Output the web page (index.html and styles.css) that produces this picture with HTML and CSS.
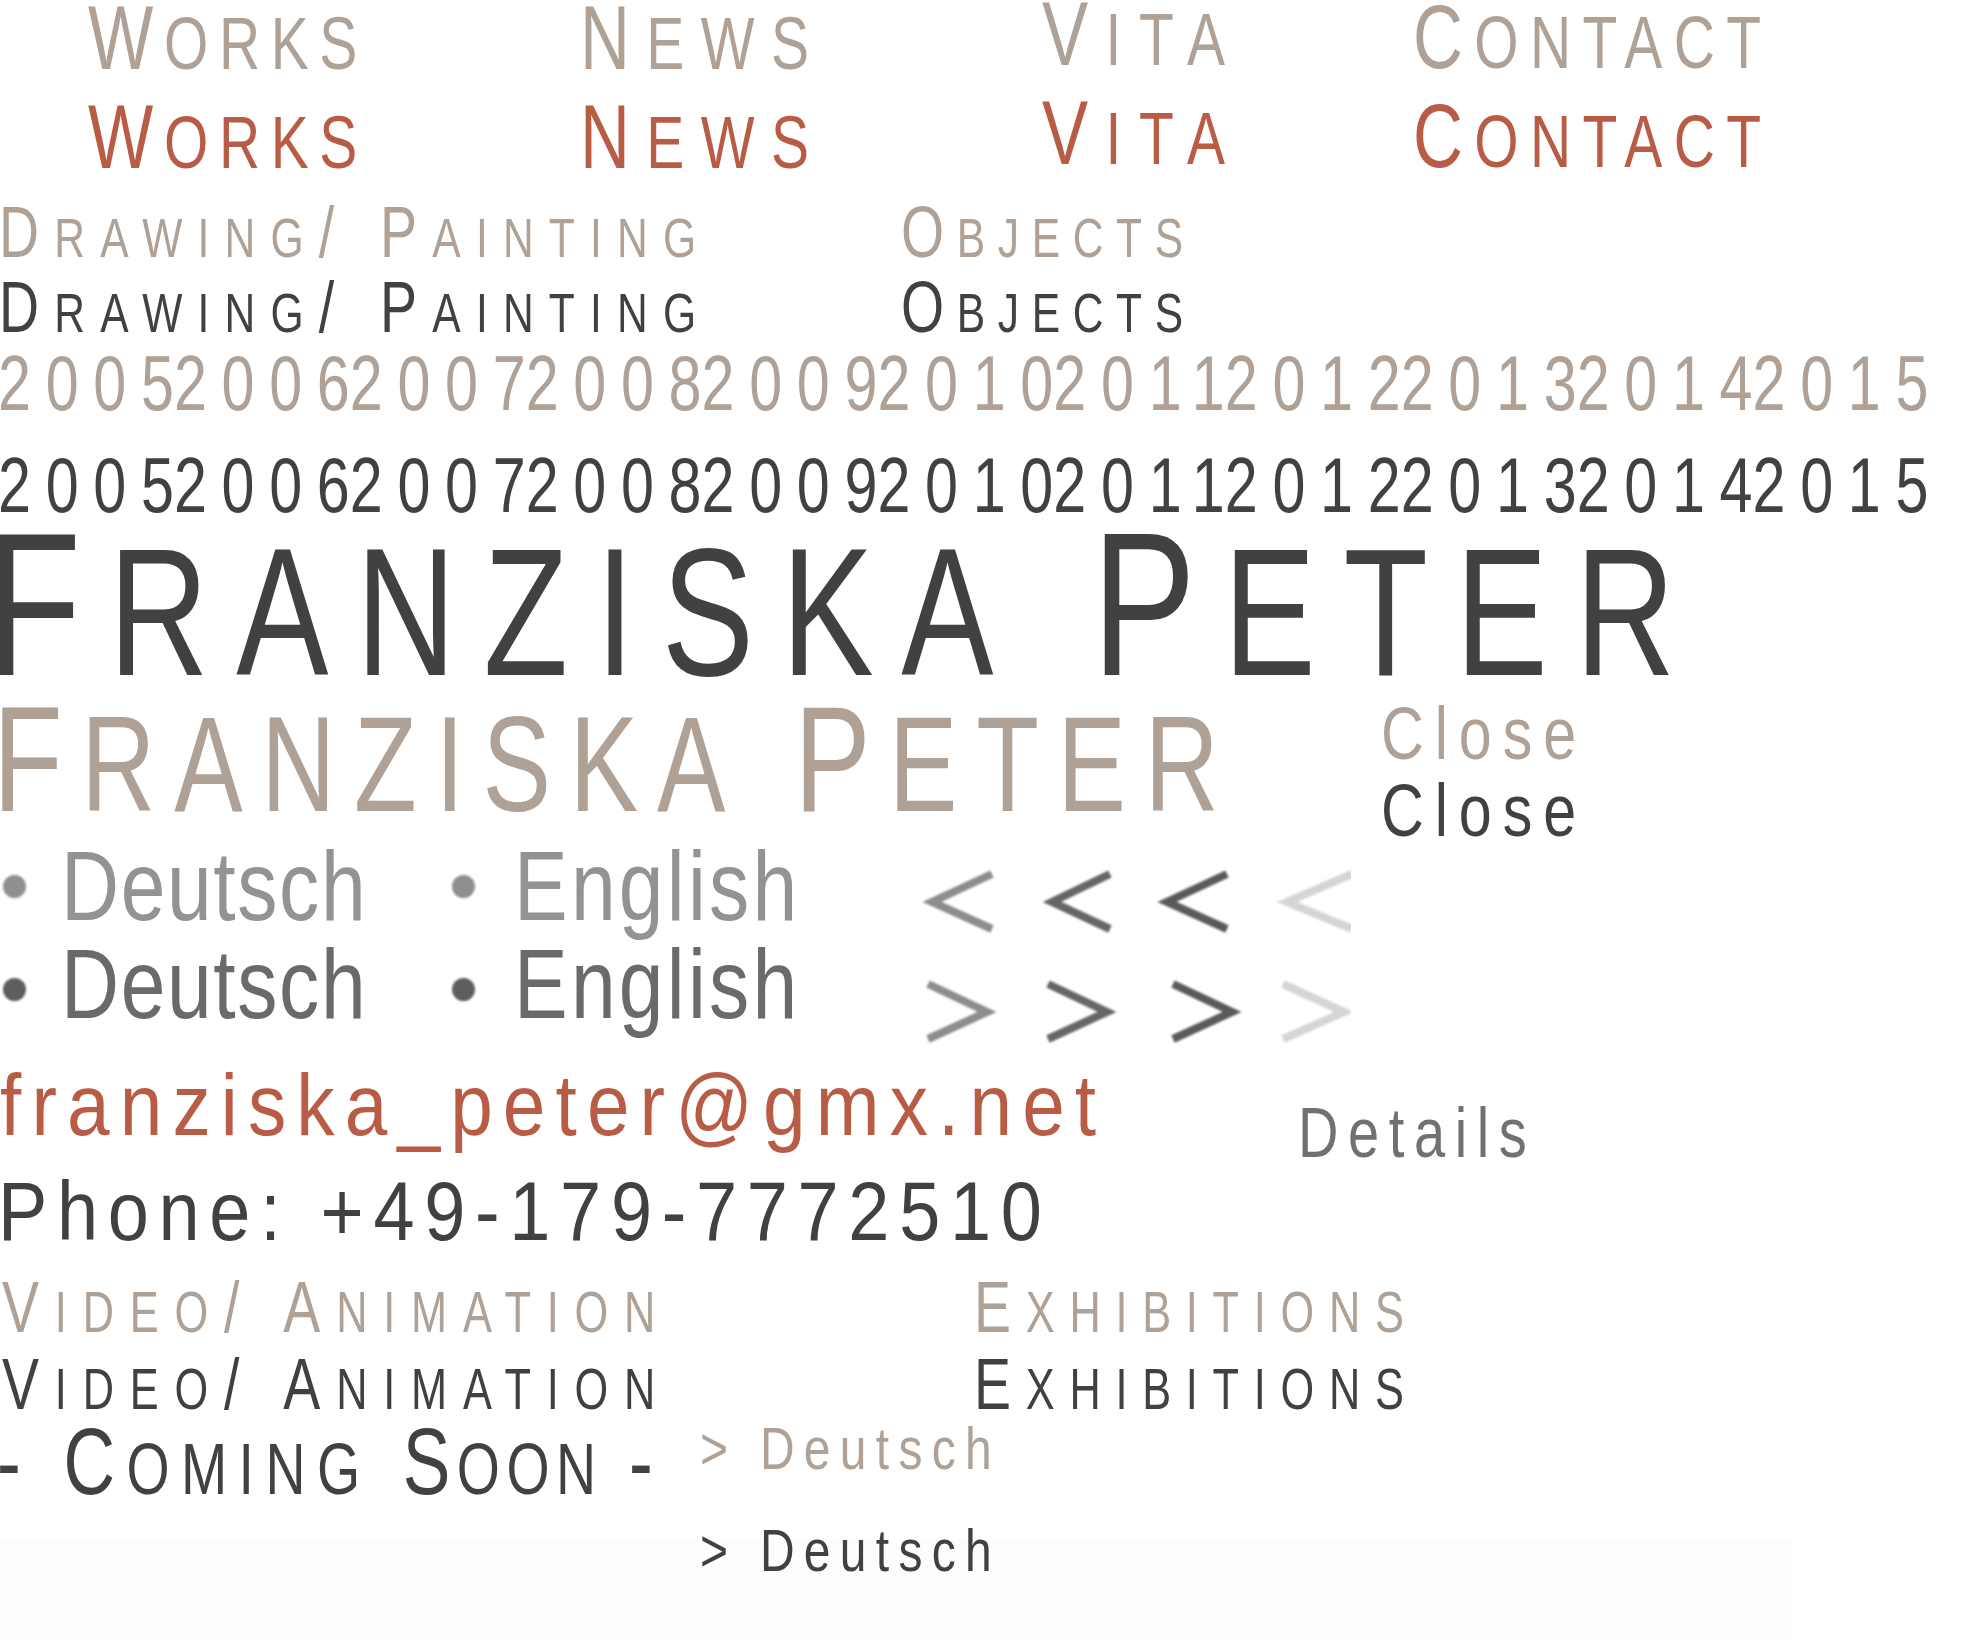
FILE: index.html
```html
<!DOCTYPE html>
<html lang="de">
<head>
<meta charset="utf-8">
<title>Franziska Peter – Sprites</title>
<link rel="stylesheet" href="styles.css">
</head>
<body>
<main class="sheet">
  <div class="haze"></div>

  <!-- navigation, normal and hover -->
  <div class="lbl nav taupe works r1">W<span class="sc">orks</span></div>
  <div class="lbl nav taupe news r1">N<span class="sc">ews</span></div>
  <div class="lbl nav taupe vita r1">V<span class="sc">ita</span></div>
  <div class="lbl nav taupe contact r1">C<span class="sc">ontact</span></div>
  <div class="lbl nav rust works r2">W<span class="sc">orks</span></div>
  <div class="lbl nav rust news r2">N<span class="sc">ews</span></div>
  <div class="lbl nav rust vita r2">V<span class="sc">ita</span></div>
  <div class="lbl nav rust contact r2">C<span class="sc">ontact</span></div>

  <!-- categories -->
  <div class="lbl cat taupe drawing c1">D<span class="sc">rawing</span>/ P<span class="sc">ainting</span></div>
  <div class="lbl cat taupe objects c1">O<span class="sc">bjects</span></div>
  <div class="lbl cat ink drawing c2">D<span class="sc">rawing</span>/ P<span class="sc">ainting</span></div>
  <div class="lbl cat ink objects c2">O<span class="sc">bjects</span></div>

  <!-- years -->
  <div class="lbl years taupe y1"><span>2005</span><span>2006</span><span>2007</span><span>2008</span><span>2009</span><span>2010</span><span>2011</span><span>2012</span><span>2013</span><span>2014</span><span>2015</span></div>
  <div class="lbl years ink y2"><span>2005</span><span>2006</span><span>2007</span><span>2008</span><span>2009</span><span>2010</span><span>2011</span><span>2012</span><span>2013</span><span>2014</span><span>2015</span></div>

  <!-- name -->
  <div class="lbl name-big ink">F<span class="sc">ranziska</span> P<span class="sc">eter</span></div>
  <div class="lbl name-mid taupe">F<span class="sc">ranziska</span> P<span class="sc">eter</span></div>

  <!-- close -->
  <div class="lbl close taupe k1">Close</div>
  <div class="lbl close ink k2">Close</div>

  <!-- language switch -->
  <div class="dot dot-gray d-de l1"></div>
  <div class="dot dot-gray d-en l1"></div>
  <div class="dot dot-dark d-de l2"></div>
  <div class="dot dot-dark d-en l2"></div>
  <div class="lbl lang lang-gray de l1">Deutsch</div>
  <div class="lbl lang lang-gray en l1">English</div>
  <div class="lbl lang lang-dark de l2">Deutsch</div>
  <div class="lbl lang lang-dark en l2">English</div>

  <!-- arrows -->
  <div class="arrows">
    <svg class="arrows-svg" width="460" height="188" viewBox="0 0 460 188" aria-hidden="true">
      <g fill="none" stroke-width="8" stroke-linecap="butt" stroke-linejoin="miter">
        <polyline points="72,12 12,40 72,67" stroke="#8d8d8d"/>
        <polyline points="190,12 132,40 190,67" stroke="#666666"/>
        <polyline points="307,12 247,40 307,67" stroke="#5a5a5a"/>
        <polyline points="432,12 367,40 432,67" stroke="#d5d5d5"/>
        <polyline points="8,122 67,150 8,177" stroke="#8d8d8d"/>
        <polyline points="128,122 187,150 128,177" stroke="#666666"/>
        <polyline points="253,122 312,150 253,177" stroke="#5a5a5a"/>
        <polyline points="363,122 424,150 363,177" stroke="#d5d5d5"/>
      </g>
    </svg>
  </div>

  <!-- contact -->
  <div class="lbl mail rust">franziska_peter@gmx.net</div>
  <div class="lbl phone ink">Phone: +49-179-7772510</div>
  <div class="lbl details">Details</div>

  <!-- more categories -->
  <div class="lbl cat taupe video v1">V<span class="sc">ideo</span>/ A<span class="sc">nimation</span></div>
  <div class="lbl cat taupe exhib v1">E<span class="sc">xhibitions</span></div>
  <div class="lbl cat ink video v2">V<span class="sc">ideo</span>/ A<span class="sc">nimation</span></div>
  <div class="lbl cat ink exhib v2">E<span class="sc">xhibitions</span></div>

  <div class="lbl soon-line ink">- C<span class="sc">oming</span> <span class="soon">S<span class="sc">oon</span> -</span></div>

  <div class="lbl more taupe m1">&gt; Deutsch</div>
  <div class="lbl more ink m2">&gt; Deutsch</div>
</main>
</body>
</html>
```

FILE: styles.css
```css
html, body {
  margin: 0;
  padding: 0;
  background: #ffffff;
}

.sheet {
  position: relative;
  width: 1970px;
  height: 1640px;
  overflow: hidden;
  background: #ffffff;
  font-family: "Liberation Sans", Arial, sans-serif;
}

.haze {
  position: absolute;
  left: 0;
  top: 1540px;
  width: 1793px;
  height: 100px;
  background: #fffcfd;
}

/* sprite labels */
.lbl {
  position: absolute;
  white-space: nowrap;
  line-height: 1;
  transform-origin: 0 0;
  font-weight: 400;
}

.sc { text-transform: uppercase; }

.taupe { color: #afa195; }
.rust  { color: #b95c45; }
.ink   { color: #414141; }

/* navigation */
.nav { font-size: 91px; transform: scaleX(0.76); }
.nav .sc { font-size: 75px; }
.r1 { top: -8px; }
.r2 { top: 91px; }
.works   { left: 88px;   letter-spacing: 14px; }
.news    { left: 580px;  letter-spacing: 21.6px; }
.vita    { left: 1042px; letter-spacing: 23px; margin-top: -4px; }
.contact { left: 1413px; letter-spacing: 14.9px; margin-top: -1px; }

/* categories */
.cat { font-size: 73px; transform: scaleX(0.76); }
.cat .sc { font-size: 56px; }
.c1 { top: 195px; }
.c2 { top: 270px; }
.drawing { left: -1px;  letter-spacing: 20px; }
.objects { left: 901px; letter-spacing: 16.6px; }

.video .sc, .exhib .sc { font-size: 57px; }
.v1 { top: 1270px; }
.v2 { top: 1347px; }
.video { left: 2px;   letter-spacing: 20.8px; }
.exhib { left: 974px; letter-spacing: 19.4px; }

/* years */
.years {
  display: flex;
  font-size: 78px;
  letter-spacing: 19.3px;
  transform: scaleX(0.76);
  left: -2px;
}
.years span { margin-right: -19.3px; }
.y1 { top: 344px; }
.y2 { top: 446px; }

/* name */
.name-big {
  font-size: 205px;
  letter-spacing: 36.3px;
  transform: scaleX(0.76);
  left: -14px;
  top: 501px;
}
.name-big .sc { font-size: 182px; }

.name-mid {
  font-size: 150px;
  letter-spacing: 24.6px;
  transform: scaleX(0.76);
  left: -7px;
  top: 684px;
}
.name-mid .sc { font-size: 135px; }

/* close */
.close {
  font-size: 74px;
  letter-spacing: 13.7px;
  transform: scaleX(0.8);
  left: 1381px;
}
.k1 { top: 697px; }
.k2 { top: 774px; }

/* language switch */
.lang {
  font-size: 98px;
  transform: scaleX(0.82);
  filter: blur(0.4px);
}
.lang-gray { color: #939395; }
.lang-dark { color: #6a6a6c; }
.lang.l1 { top: 837px; }
.lang.l2 { top: 935px; }
.lang.de { left: 61px;  letter-spacing: 2px; }
.lang.en { left: 514px; letter-spacing: 4px; }

.dot {
  position: absolute;
  width: 23px;
  height: 23px;
  border-radius: 50%;
  filter: blur(1.2px);
}
.dot-gray { background: #8f8f91; }
.dot-dark { background: #5e5e60; }
.dot.d-de { left: 3px; }
.dot.d-en { left: 452px; }
.dot.l1 { top: 875px; }
.dot.l2 { top: 978px; }

/* arrows */
.arrows {
  position: absolute;
  left: 920px;
  top: 862px;
  width: 431px;
  height: 188px;
  overflow: hidden;
}
.arrows-svg {
  display: block;
  filter: blur(1.3px);
}

/* contact */
.mail {
  font-size: 87px;
  letter-spacing: 11.5px;
  transform: scaleX(0.88);
  left: 0;
  top: 1061px;
}
.phone {
  font-size: 84px;
  letter-spacing: 11px;
  transform: scaleX(0.88);
  left: -2px;
  top: 1169px;
}
.details {
  font-size: 70px;
  letter-spacing: 12px;
  transform: scaleX(0.8);
  color: #717171;
  left: 1298px;
  top: 1098px;
}

/* coming soon */
.soon-line {
  font-size: 94px;
  letter-spacing: 15px;
  transform: scaleX(0.76);
  left: -3px;
  top: 1415px;
}
.soon-line .sc { font-size: 73px; }
.soon { letter-spacing: 8.5px; }

/* more link */
.more {
  font-size: 60px;
  letter-spacing: 11.6px;
  transform: scaleX(0.8);
  left: 700px;
}
.m1 { top: 1419px; }
.m2 { top: 1521px; }
```
